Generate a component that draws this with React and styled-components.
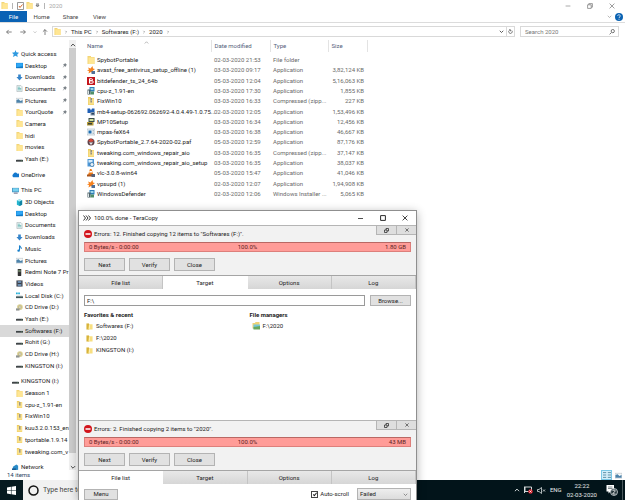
import React from "react";
import styled, { createGlobalStyle } from "styled-components";

const GlobalStyle = createGlobalStyle`
	*, *:before, *:after {
		box-sizing: border-box;
	}
	body {
		background-color: #fff;
		color: #1c1c1c;
		font: 6px/8px Roboto, "Open Sans", sans-serif;
		margin: 0;
		overflow: hidden;
	}
	button, input, select {
		color: inherit;
		font: inherit;
		margin: 0;
	}
	svg {
		display: block;
		flex: none;
	}
`;

// Explorer window
const Screen = styled.div`
	display: flex;
	flex-direction: column;
	height: 100vh;
	position: relative;
`;

const TitleBar = styled.header`
	align-items: center;
	color: #a9a9a9;
	display: flex;
	flex: none;
	gap: 2px;
	height: 11px;
	padding: 0 3px 0 1px;
`;

const Divider = styled.span`
	background-color: #b5b5b5;
	height: 6px;
	margin: 0 2px;
	width: 1px;
`;

const Spacer = styled.span`
	flex: 1;
`;

const PlainButton = styled.button`
	align-items: center;
	background: none;
	border: 0;
	display: flex;
	flex: none;
	justify-content: center;
	padding: 0;
	width: ${({ $width }) => $width || 8}px;
`;

const Ribbon = styled.nav`
	align-items: stretch;
	border-bottom: 1px solid #dcdcdc;
	display: flex;
	flex: none;
	height: 12px;
`;

const RibbonTab = styled.button`
	background-color: ${({ $active }) => ($active ? "#0a62b4" : "transparent")};
	border: 0;
	color: ${({ $active }) => ($active ? "#fff" : "#444")};
	padding: 0;
	width: ${({ $active }) => ($active ? 27 : 29)}px;
`;

const AddressBar = styled.div`
	align-items: center;
	display: flex;
	flex: none;
	height: 17px;
	padding: 0 6px 0 5px;
`;

const Arrows = styled.div`
	align-items: center;
	display: flex;
	flex: none;
	gap: 5px;
	width: 47px;
`;

const AddressBox = styled.div`
	align-items: center;
	border: 1px solid #d9d9d9;
	display: flex;
	flex: 1;
	gap: 3px;
	height: 11px;
	padding-left: 1px;
`;

const Crumb = styled.a`
	color: #1c1c1c;
	text-decoration: none;
`;

const RefreshButton = styled.button`
	align-items: center;
	align-self: stretch;
	background: none;
	border: 0;
	border-left: 1px solid #d9d9d9;
	display: flex;
	justify-content: center;
	padding: 0;
	width: 8px;
`;

const SearchBox = styled.label`
	align-items: center;
	border: 1px solid #d9d9d9;
	display: flex;
	height: 11px;
	margin-left: 5px;
	padding: 0 3px 0 4px;
	width: 99px;
	input {
		background: none;
		border: 0;
		flex: 1;
		height: 8px;
		min-width: 0;
		outline: none;
		padding: 0;
	}
	input::placeholder {
		color: #777;
	}
`;

const Main = styled.div`
	display: flex;
	flex: 1;
	min-height: 0;
`;

const Sidebar = styled.nav`
	flex: none;
	overflow: hidden;
	width: 69px;
`;

const Tree = styled.ul`
	display: flex;
	flex-direction: column;
	height: calc(100% + 3px);
	list-style: none;
	margin: 0;
	padding: 8px 0 0;
`;

const TreeItem = styled.li`
	align-items: center;
	background-color: ${({ $selected }) => ($selected ? "#d9d9d9" : "transparent")};
	display: flex;
	flex: 1 1 0;
	gap: 2px;
	margin-top: ${({ $spaced }) => ($spaced ? 4 : 0)}px;
	min-height: 0;
	padding-left: ${({ $top }) => ($top ? 12 : 16)}px;
	white-space: nowrap;
	a {
		color: inherit;
		flex: 1;
		text-decoration: none;
	}
`;

const PinSlot = styled.span`
	margin-right: 2px;
`;

const ScrollBar = styled.div`
	align-items: center;
	background-color: #f0f0f0;
	display: flex;
	flex: none;
	flex-direction: column;
	padding-top: 2px;
	width: 7px;
`;

const ScrollThumb = styled.div`
	background-color: #cdcdcd;
	flex: 1;
	margin-bottom: 11px;
	width: 100%;
`;

const Files = styled.div`
	flex: 1;
	padding: 0 0 0 8px;
`;

const FileTable = styled.table`
	border-collapse: collapse;
	height: 159px;
	table-layout: fixed;
	width: 283px;
	th {
		border-right: 1px solid #e3e3e3;
		color: #54617a;
		font-weight: 400;
		height: 12px;
		padding: 0 0 0 3px;
		position: relative;
		text-align: left;
	}
	td {
		color: #6a6a6a;
		padding: 0 0 0 3px;
		white-space: nowrap;
	}
	td:last-child {
		padding-right: 3px;
		text-align: right;
	}
	tbody:before {
		content: "";
		display: table-row;
		height: 3px;
	}
`;

const SortMark = styled.span`
	left: 60px;
	position: absolute;
	top: 0;
`;

const FileName = styled.span`
	align-items: center;
	color: #1c1c1c;
	display: flex;
	gap: 2px;
`;

const StatusBar = styled.footer`
	align-items: center;
	color: #2b3f5f;
	display: flex;
	flex: none;
	gap: 2px;
	height: 10px;
	padding: 0 2px 0 7px;
`;

const ViewButton = styled(PlainButton)`
	background-color: ${({ $on }) => ($on ? "#d3eef9" : "transparent")};
	border: 1px solid ${({ $on }) => ($on ? "#7cc8e6" : "transparent")};
	height: 10px;
`;

// Taskbar
const Taskbar = styled.footer`
	align-items: stretch;
	background-color: #02141a;
	color: #e6eaeb;
	display: flex;
	flex: none;
	height: 20px;
`;

const StartButton = styled(PlainButton)`
	background-color: #061a20;
`;

const TaskSearch = styled.label`
	align-items: center;
	background-color: #f1f1f1;
	display: flex;
	font-size: 7px;
	gap: 4px;
	padding-left: 5px;
	width: 140px;
	input {
		background: none;
		border: 0;
		flex: 1;
		min-width: 0;
		outline: none;
		padding: 0;
	}
	input::placeholder {
		color: #444;
	}
`;

const Tray = styled.div`
	align-items: center;
	display: flex;
	gap: 4px;
	padding-right: 2px;
`;

const Clock = styled.time`
	line-height: 9px;
	margin: 0 5px 0 1px;
	text-align: center;
`;

const DesktopEdge = styled.span`
	align-self: stretch;
	border-left: 1px solid #4a585c;
`;

// Copy window, floats over the explorer
const CopyWindow = styled.section`
	background-color: #fff;
	border: 1px solid #8f8f8f;
	border-bottom: 0;
	bottom: 0;
	box-shadow: 0 2px 9px rgba(0, 0, 0, .3);
	display: flex;
	flex-direction: column;
	left: 78px;
	overflow: hidden;
	position: absolute;
	top: 210px;
	width: 339px;
`;

const CopyTitle = styled.header`
	align-items: center;
	display: flex;
	flex: none;
	gap: 3px;
	height: 14px;
	padding: 0 2px 0 4px;
`;

const CopyPanel = styled.div`
	background-color: #f2f2f2;
	border-top: 1px solid #b5b5b5;
	display: flex;
	flex: none;
	flex-direction: column;
	padding: 0 5px 4px;
	position: relative;
`;

const PanelTools = styled.div`
	display: flex;
	position: absolute;
	right: 0;
	top: 0;
	button {
		background-color: #dedede;
		border: solid #b5b5b5;
		border-width: 0 0 1px 1px;
		height: 9px;
		width: 20px;
	}
`;

const Message = styled.div`
	align-items: center;
	display: flex;
	gap: 2px;
	height: 16px;
`;

const Progress = styled.div`
	align-items: center;
	background-color: #ff9c98;
	border: 1px solid #dd7f7b;
	border-top-color: #b96864;
	color: #5a1f1f;
	display: grid;
	grid-template-columns: 1fr 1fr 1fr;
	height: 10px;
	padding: 0 4px;
	span:nth-child(2) {
		text-align: center;
	}
	span:nth-child(3) {
		text-align: right;
	}
`;

const ButtonRow = styled.div`
	display: flex;
	gap: 4px;
	padding-top: 6px;
`;

const Button = styled.button`
	background-color: #e1e1e1;
	border: 1px solid #b3b3b3;
	flex: none;
	height: ${({ $height }) => $height || 13}px;
	padding: 0;
	width: ${({ $width }) => $width || 41}px;
`;

const Tabs = styled.div`
	border-top: 1px solid #a5a5a5;
	display: grid;
	flex: none;
	grid-template-columns: repeat(4, 1fr);
	height: 14px;
`;

const Tab = styled.button`
	background: ${({ $active }) => ($active ? "#fff" : "linear-gradient(#e8e8e8, #d6d6d6)")};
	border: 0;
	border-right: 1px solid ${({ $active }) => ($active ? "#fff" : "#c4c4c4")};
	padding: 0;
`;

const TargetPage = styled.div`
	flex: 1;
	padding: 6px 5px;
`;

const PathRow = styled.div`
	display: flex;
	gap: 5px;
	input {
		background-color: #fff;
		border: 1px solid #9a9a9a;
		flex: 1;
		height: 11px;
		min-width: 0;
		outline: none;
		padding: 0 2px;
	}
`;

const Places = styled.div`
	column-gap: 4px;
	display: grid;
	grid-template-columns: 1fr 1fr;
	padding-top: 5px;
	h2 {
		font-size: 6px;
		font-weight: 700;
		line-height: 8px;
		margin: 0;
	}
	ul {
		list-style: none;
		margin: 0;
		padding: 1px 0 0 2px;
	}
	li {
		align-items: center;
		display: flex;
		gap: 3px;
		height: 12px;
	}
	a {
		color: inherit;
		text-decoration: none;
	}
`;

const ListFooter = styled.div`
	align-items: center;
	display: flex;
	flex: none;
	height: 16px;
	justify-content: flex-end;
	padding: 4px 5px 0;
`;

const CheckLabel = styled.label`
	align-items: center;
	display: flex;
	gap: 2px;
	margin: 0 8px 0 auto;
	input {
		appearance: none;
		background-color: #fff;
		border: 1px solid #444;
		display: grid;
		height: 7px;
		width: 7px;
	}
	input:checked:after {
		border: solid #222;
		border-width: 0 1px 1px 0;
		content: "";
		height: 4px;
		place-self: center;
		transform: rotate(40deg);
		width: 2px;
	}
`;

const SelectWrap = styled.span`
	align-items: center;
	background: linear-gradient(#eee, #dcdcdc);
	border: 1px solid #b3b3b3;
	display: flex;
	height: 12px;
	padding: 0 2px;
	width: 54px;
	select {
		appearance: none;
		background: none;
		border: 0;
		flex: 1;
		outline: none;
		padding: 0;
	}
`;

// Icons
const Line = ({ d, size = 6, color = "#555", width = 1.2 }) =>
	<svg width={size} height={size} viewBox="0 0 10 10" fill="none" stroke={color} strokeWidth={width}>
		<path d={d} />
	</svg>;

const DOWN = "M1.5 3.5 5 7l3.5-3.5";
const UP = "M1.5 7 5 3.5 8.5 7";
const RIGHT = "M3.5 2 6.5 5l-3 3";
const CROSS = "M1 1l8 8M9 1 1 9";

const drawings = {
	folder: <><path d="M1 0h7v2h7v14H1z" fill="#f3d577" /><path d="M3 3h12v13H3z" fill="#ffe694" /></>,
	zip: <><path d="M2 0h6v2h6v14H2z" fill="#eecb5e" /><path d="M3 3h11v12H3z" fill="#f9e08a" /><path d="M7 2h3v9H7z" fill="#77715a" /><path d="M7 4h3M7 7h3M7 10h3" stroke="#eee" /></>,
	star: <path d="M8 0l2 5 6 1-4 4 1 6-5-3-6 3 2-6-4-4 6-1z" fill="#2f9ae0" />,
	desktop: <><path d="M0 2h16v12H0z" fill="#1687d9" /><path d="M1 3h14v6L1 12z" fill="#31a8f5" /><path d="M1 13h14" stroke="#0b5c9b" /></>,
	downloads: <path d="M5 1h6v6h4l-7 8-7-8h4z" fill="#3584ca" />,
	documents: <><path d="M2 1h9l3 3v11H2z" fill="#edf4f4" stroke="#8a9b9e" /><path d="M4 5h5M4 8h8M4 11h8" stroke="#4dabaa" strokeWidth="1.5" /></>,
	pictures: <><path d="M0 3h16v11H0z" fill="#f5f8fa" stroke="#a0aab0" /><path d="M1 7l5-2 4 4 5-2v6H1z" fill="#4d83aa" /></>,
	drive: <><path d="M2 7h12l2 3H0z" fill="#d5d8da" /><path d="M0 9h16v4H0z" fill="#3f4446" /><path d="M12 11h2" stroke="#70e084" /></>,
	cloud: <path d="M3 14a4 4 0 010-7 5 5 0 019-1 4 4 0 013 8z" fill="#1479ce" />,
	pc: <><path d="M0 2h16v10H0z" fill="#4a98c4" /><path d="M2 3h13v7H2z" fill="#78d1ef" /><path d="M4 14h9" stroke="#557" strokeWidth="2" /></>,
	cube: <><path d="M2 3l6-2 6 2v10l-6 3-6-3z" fill="#24b4ce" /><path d="M2 3l6 3 6-3-6-2z" fill="#9fe9f3" /><path d="M8 6v10l6-3V3z" fill="#1184a3" /></>,
	music: <><path d="M8 1v11M8 1c1 4 5 3 4 8" fill="none" stroke="#187fca" strokeWidth="2.4" /><ellipse cx="6" cy="13" rx="3" ry="2.5" fill="#187fca" /></>,
	phone: <><rect x="4" y="0" width="8" height="16" rx="1" fill="#333" /><path d="M5 2h6v5H5z" fill="#687b62" /></>,
	videos: <><path d="M1 1h14v14H1z" fill="#393d48" /><path d="M4 2h8v5H4zM4 9h8v5H4z" fill="#6a8cae" /><path d="M2.500 1v14M13.500 1v14" stroke="#ccc" strokeDasharray="1 2" /></>,
	localdisk: <><path d="M0 1h4v4H0zM5 1h4v4H5z" fill="#27b0d8" /><path d="M2 8h12l2 2H0z" fill="#ccd1d3" /><path d="M0 10h16v4H0z" fill="#3f5558" /></>,
	cd: <><circle cx="9" cy="7" r="6.500" fill="#d9cf94" /><circle cx="9" cy="7" r="2.500" fill="#fff" stroke="#837b55" /><path d="M0 10h8v5H0z" fill="#8f9390" /></>,
	network: <><path d="M2 6l8-5 4 3v9l-9 2-3-3z" fill="#2a8bc8" /><path d="M0 10h9v4H0z" fill="#175c93" /></>,
	avast: <><path d="M2 3l5 2 4-5 1 5 4 1-4 3 1 6-5-3-5 3 1-5-4-1 4-2z" fill="#f58220" /><path d="M9 10h7v6H9z" fill="#4f6f98" /></>,
	bitdefender: <><path d="M0 0h16v16H0z" fill="#c4151c" /><path d="M5 3.500h4a2 2 0 010 4H5h5a2 2 0 010 5H5z" fill="none" stroke="#fff" strokeWidth="2" /></>,
	installer: <><path d="M5 0h10v9H5z" fill="#2f7fb8" /><path d="M7 2h6v4H7z" fill="#9cd5e9" /><path d="M1 5h6v10H1z" fill="#4d6067" /><path d="M7 9h7v6H7z" fill="#4f8e67" /><path d="M3 7v7" stroke="#dde5e6" strokeWidth="2" /></>,
	malware: <><path d="M1 1h5l2 4 2-4h5v9H1z" fill="#1f5fb5" /><path d="M7 8h9v7H7z" fill="#8b9cb0" /><path d="M9 10h5v3H9z" fill="#28415f" /></>,
	mp10: <><path d="M3 0h12v8H3z" fill="#3b4c4b" /><path d="M5 2h8v4H5z" fill="#cfe0a0" /><path d="M0 8h13v7H0z" fill="#b49b38" /><path d="M2 10h8v3H2z" fill="#3c4137" /></>,
	app: <><path d="M0 2h16v12H0z" fill="#eef3f6" stroke="#92a5b1" /><path d="M3 5h6v6H3z" fill="#1f6eb0" /><path d="M11 5h3M11 8h3M11 11h3" stroke="#789" /></>,
	spybot: <><circle cx="8" cy="8" r="7" fill="#5c4249" /><path d="M2 6l6-5 6 5-6 2z" fill="#d6483a" /><path d="M4 9h8l-4 5z" fill="#e5e7ea" /></>,
	setup: <><path d="M1 0h13v15H1z" fill="#4d97d6" /><path d="M3 2h8v5H3z" fill="#d8ecfa" /><circle cx="10" cy="11" r="4" fill="#e7f2f8" stroke="#3471a7" strokeWidth="1.500" /></>,
	vlc: <><path d="M6 0h3l4 12H2z" fill="#ef7a16" /><path d="M5 4h5l1 3H4z" fill="#fff" /><path d="M0 11h15v4H0z" fill="#a8551c" /><path d="M9 10h7v6H9z" fill="#55617a" /></>,
	shared: <><path d="M1 2h5l1-2h8v13H1z" fill="#f0d375" /><path d="M3 5h13v9H3z" fill="#75c8dc" /><path d="M3 10l13-2v7H3z" fill="#6aa85c" /></>,
	error: <><circle cx="8" cy="8" r="8" fill="#d2141c" /><path d="M3 6.500h10v3H3z" fill="#fff" /></>,
	goldfolder: <><path d="M1 1h6v14H1z" fill="#d8b43c" /><path d="M7 3h8v12H5z" fill="#f8df80" /><path d="M8 5v8" stroke="#fff4b8" strokeWidth="2" /></>
};

const Icon = ({ name, size = 7 }) =>
	<svg width={size} height={size} viewBox="0 0 16 16" aria-hidden="true">{drawings[name]}</svg>;

const Pin = () =>
	<svg width="5" height="5" viewBox="0 0 10 10" aria-hidden="true">
		<path d="M6 0l4 4-2 1-1 3-2-2-4 4 3-5-2-2 3-1z" fill="#7b8288" />
	</svg>;

// Data
const tree = [
	{ label: "Quick access", icon: "star", top: true },
	{ label: "Desktop", icon: "desktop", pin: true },
	{ label: "Downloads", icon: "downloads", pin: true },
	{ label: "Documents", icon: "documents", pin: true },
	{ label: "Pictures", icon: "pictures", pin: true },
	{ label: "YourQuote", icon: "folder", pin: true },
	{ label: "Camera", icon: "folder" },
	{ label: "hidi", icon: "folder" },
	{ label: "movies", icon: "folder" },
	{ label: "Yash (E:)", icon: "drive" },
	{ label: "OneDrive", icon: "cloud", top: true, spaced: true },
	{ label: "This PC", icon: "pc", top: true, spaced: true },
	{ label: "3D Objects", icon: "cube" },
	{ label: "Desktop", icon: "desktop" },
	{ label: "Documents", icon: "documents" },
	{ label: "Downloads", icon: "downloads" },
	{ label: "Music", icon: "music" },
	{ label: "Pictures", icon: "pictures" },
	{ label: "Redmi Note 7 Pr", icon: "phone" },
	{ label: "Videos", icon: "videos" },
	{ label: "Local Disk (C:)", icon: "localdisk" },
	{ label: "CD Drive (D:)", icon: "cd" },
	{ label: "Yash (E:)", icon: "drive" },
	{ label: "Softwares (F:)", icon: "drive", selected: true },
	{ label: "Rohit (G:)", icon: "drive" },
	{ label: "CD Drive (H:)", icon: "cd" },
	{ label: "KINGSTON (I:)", icon: "drive" },
	{ label: "KINGSTON (I:)", icon: "drive", top: true, spaced: true },
	{ label: "Season 1", icon: "folder" },
	{ label: "cpu-z_1.91-en", icon: "zip" },
	{ label: "FixWin10", icon: "zip" },
	{ label: "kuu3.2.0.153_en", icon: "zip" },
	{ label: "tportable.1.9.14", icon: "zip" },
	{ label: "tweaking.com_v", icon: "zip" },
	{ label: "Network", icon: "network", top: true, spaced: true }
];

const files = [
	["folder", "SpybotPortable", "02-03-2020 21:53", "File folder", ""],
	["avast", "avast_free_antivirus_setup_offline (1)", "03-03-2020 09:17", "Application", "3,82,124 KB"],
	["bitdefender", "bitdefender_ts_24_64b", "05-03-2020 12:04", "Application", "5,16,063 KB"],
	["installer", "cpu-z_1.91-en", "03-03-2020 17:30", "Application", "1,855 KB"],
	["zip", "FixWin10", "03-03-2020 16:33", "Compressed (zipp...", "227 KB"],
	["malware", "mb4-setup-062692.062692-4.0.4.49-1.0.75...", "02-03-2020 12:05", "Application", "1,53,496 KB"],
	["mp10", "MP10Setup", "03-03-2020 16:34", "Application", "12,456 KB"],
	["app", "mpas-feX64", "03-03-2020 16:38", "Application", "46,667 KB"],
	["spybot", "SpybotPortable_2.7.64-2020-02.paf", "05-03-2020 12:59", "Application", "87,176 KB"],
	["zip", "tweaking.com_windows_repair_aio", "03-03-2020 16:35", "Compressed (zipp...", "37,147 KB"],
	["setup", "tweaking.com_windows_repair_aio_setup", "03-03-2020 16:35", "Application", "38,037 KB"],
	["vlc", "vlc-3.0.8-win64", "05-03-2020 15:47", "Application", "41,046 KB"],
	["avast", "vpsupd (1)", "02-03-2020 12:07", "Application", "1,94,908 KB"],
	["installer", "WindowsDefender", "02-03-2020 12:06", "Windows Installer ...", "5,065 KB"]
];

const CopyJob = ({ message, size, active }) =>
	<>
		<CopyPanel>
			<PanelTools>
				<PlainButton aria-label="Detach"><Line d="M1 4h5v5H1zM4 4V1h5v5H6" size={5} color="#333" width={1.600} /></PlainButton>
				<PlainButton aria-label="Remove"><Line d={CROSS} size={4} color="#333" width={1.600} /></PlainButton>
			</PanelTools>
			<Message><Icon name="error" size={8} />{message}</Message>
			<Progress><span>0 Bytes/s - 0:00:00</span><span>100.0%</span><span>{size}</span></Progress>
			<ButtonRow>
				<Button>Next</Button>
				<Button>Verify</Button>
				<Button>Close</Button>
			</ButtonRow>
		</CopyPanel>
		<Tabs role="tablist">
			{["File list", "Target", "Options", "Log"].map(name =>
				<Tab key={name} role="tab" aria-selected={name === active} $active={name === active}>{name}</Tab>
			)}
		</Tabs>
	</>;

const Copier = () =>
	<CopyWindow>
		<CopyTitle>
			<svg width="8" height="6" viewBox="0 0 16 12" fill="none" stroke="#222" strokeWidth="1.8">
				<path d="M1 1l4 5-4 5M6 1l4 5-4 5M11 1l4 5-4 5" />
			</svg>
			100.0% done - TeraCopy
			<Spacer />
			<PlainButton $width={20} aria-label="Minimize"><Line d="M0 5h10" size={5} color="#222" width={1.600} /></PlainButton>
			<PlainButton $width={20} aria-label="Maximize"><Line d="M1 1h8v8H1z" color="#222" width={1.600} /></PlainButton>
			<PlainButton $width={18} aria-label="Close window"><Line d={CROSS} color="#222" width={1.400} /></PlainButton>
		</CopyTitle>
		<CopyJob message={"Errors: 12. Finished copying 12 items to \"Softwares (F:)\"."} size="1.80 GB" active="Target" />
		<TargetPage>
			<PathRow>
				<input aria-label="Target folder" defaultValue="F:\" />
				<Button $height={11}>Browse...</Button>
			</PathRow>
			<Places>
				<div>
					<h2>Favorites &amp; recent</h2>
					<ul>
						<li><Icon name="goldfolder" /><a href="#softwares">Softwares (F:)</a></li>
						<li><Icon name="goldfolder" /><a href="#f2020">F:\2020</a></li>
						<li><Icon name="goldfolder" /><a href="#kingston">KINGSTON (I:)</a></li>
					</ul>
				</div>
				<div>
					<h2>File managers</h2>
					<ul>
						<li><Icon name="shared" size={8} /><a href="#manager">F:\2020</a></li>
					</ul>
				</div>
			</Places>
		</TargetPage>
		<CopyJob message={"Errors: 2. Finished copying 2 items to \"2020\"."} size="43 MB" active="File list" />
		<ListFooter>
			<Button $width={34} $height={11}>Menu</Button>
			<CheckLabel><input type="checkbox" defaultChecked />Auto-scroll</CheckLabel>
			<SelectWrap>
				<select aria-label="Filter" defaultValue="Failed"><option>Failed</option><option>All</option></select>
				<Line d={DOWN} size={5} />
			</SelectWrap>
		</ListFooter>
	</CopyWindow>;

const App = () =>
	<Screen>
		<GlobalStyle />
		<TitleBar>
			<Icon name="folder" />
			<Divider />
			<svg width="7" height="8" viewBox="0 0 14 16"><path d="M1 1h12v14H1z" fill="#fff" stroke="#777" strokeWidth="1.500" /><path d="M4 8l2 3 5-6" fill="none" stroke="#d6682d" strokeWidth="2" /></svg>
			<Icon name="folder" />
			<Line d="M2 2h6M2 4.500h6L5 8z" size={5} color="#333" />
			<Divider />
			2020
			<Spacer />
			<PlainButton $width={20} aria-label="Minimize"><Line d="M1 5h8" color="#888" /></PlainButton>
			<PlainButton $width={20} aria-label="Restore"><Line d="M1 3h6v6H1zM3 3V1h6v6H7" color="#777" /></PlainButton>
			<PlainButton $width={20} aria-label="Close"><Line d={CROSS} color="#777" /></PlainButton>
		</TitleBar>
		<Ribbon>
			<RibbonTab $active>File</RibbonTab>
			<RibbonTab>Home</RibbonTab>
			<RibbonTab>Share</RibbonTab>
			<RibbonTab>View</RibbonTab>
			<Spacer />
			<PlainButton aria-label="Expand ribbon"><Line d={DOWN} size={5} color="#888" /></PlainButton>
			<PlainButton $width={12} aria-label="Help">
				<svg width="8" height="8" viewBox="0 0 16 16"><circle cx="8" cy="8" r="8" fill="#0b63b3" /><path d="M5.500 6c0-4 5-3 5 0 0 2-2.500 2-2.500 4M8 11.500v2" fill="none" stroke="#fff" strokeWidth="1.500" /></svg>
			</PlainButton>
		</Ribbon>
		<AddressBar>
			<Arrows>
				<PlainButton aria-label="Back"><Line d="M9.500 5H1M4.500 1.500 1 5l3.500 3.500" /></PlainButton>
				<PlainButton $width={10} aria-label="Forward"><Line d="M.5 5H9M5.500 1.500 9 5 5.500 8.500" /></PlainButton>
				<PlainButton $width={4} aria-label="Recent"><Line d={DOWN} size={4} color="#888" /></PlainButton>
				<PlainButton $width={6} aria-label="Up"><Line d="M5 10V1M1.500 4.500 5 1l3.500 3.500" /></PlainButton>
			</Arrows>
			<AddressBox>
				<Icon name="folder" />
				<Line d={RIGHT} size={4} />
				<Crumb href="#pc">This PC</Crumb>
				<Line d={RIGHT} size={4} />
				<Crumb href="#f">Softwares (F:)</Crumb>
				<Line d={RIGHT} size={4} />
				<Crumb href="#2020">2020</Crumb>
				<Line d={RIGHT} size={4} />
				<Spacer />
				<PlainButton $width={4} aria-label="History"><Line d={DOWN} size={5} color="#333" width={1.600} /></PlainButton>
				<RefreshButton aria-label="Refresh"><Line d="M3 2.500a3.500 3.500 0 104.500.500M2 1.500h3v3" size={5} color="#333" /></RefreshButton>
			</AddressBox>
			<SearchBox>
				<input aria-label="Search" placeholder="Search 2020" />
				<Line d="M4 6 1 9M9 3.500a2.700 2.700 0 11-5.400 0 2.700 2.700 0 015.400 0z" color="#444" />
			</SearchBox>
		</AddressBar>
		<Main>
			<Sidebar>
				<Tree>
					{tree.map((item, i) =>
						<TreeItem key={i} $top={item.top} $spaced={item.spaced} $selected={item.selected}>
							<Icon name={item.icon} />
							<a href="#folder">{item.label}</a>
							{item.pin && <PinSlot><Pin /></PinSlot>}
						</TreeItem>
					)}
				</Tree>
			</Sidebar>
			<ScrollBar>
				<Line d={UP} color="#444" width={1.600} />
				<ScrollThumb />
				<Line d={DOWN} color="#444" width={1.600} />
			</ScrollBar>
			<Files>
				<FileTable>
					<colgroup>
						<col style={{ width: "127px" }} />
						<col style={{ width: "59px" }} />
						<col style={{ width: "58px" }} />
						<col style={{ width: "39px" }} />
					</colgroup>
					<thead>
						<tr>
							<th>Name<SortMark><Line d={UP} size={5} color="#888" /></SortMark></th>
							<th>Date modified</th>
							<th>Type</th>
							<th>Size</th>
						</tr>
					</thead>
					<tbody>
						{files.map(([icon, name, date, type, size]) =>
							<tr key={name}>
								<td><FileName><Icon name={icon} size={8} />{name}</FileName></td>
								<td>{date}</td>
								<td>{type}</td>
								<td>{size}</td>
							</tr>
						)}
					</tbody>
				</FileTable>
			</Files>
		</Main>
		<StatusBar>
			14 items
			<Spacer />
			<ViewButton $width={11} $on aria-label="Details view"><Line d="M0 2h4M6 2h4M0 5h4M6 5h4M0 8h4M6 8h4" size={8} color="#5d8fa6" /></ViewButton>
			<ViewButton $width={9} aria-label="Thumbnail view"><Icon name="pictures" /></ViewButton>
		</StatusBar>
		<Taskbar>
			<StartButton $width={23} aria-label="Start">
				<svg width="9" height="9" viewBox="0 0 16 16"><path d="M0 2.500 7 1.500v6H0zM8 1.300 16 0v7.500H8zM0 8.500h7v6l-7-1zM8 8.500h8V16l-8-1.300z" fill="#fff" /></svg>
			</StartButton>
			<TaskSearch>
				<svg width="11" height="11" viewBox="0 0 11 11"><circle cx="5.500" cy="5.500" r="4.500" fill="none" stroke="#111" strokeWidth="1.500" /></svg>
				<input aria-label="Taskbar search" placeholder="Type here to search" />
			</TaskSearch>
			<Spacer />
			<Tray>
				<Line d={UP} color="#e6eaeb" width={1.500} />
				<svg width="9" height="8" viewBox="0 0 18 16"><path d="M2 2h13v9H2zM1 1v13" fill="none" stroke="#e6eaeb" strokeWidth="1.800" /><circle cx="13" cy="11" r="4.500" fill="#d8232f" /><path d="M11 9l4 4M15 9l-4 4" stroke="#fff" strokeWidth="1.500" /></svg>
				<svg width="9" height="7" viewBox="0 0 18 14"><path d="M1 5h3l5-4v12L4 9H1zM12 5l4 4M16 5l-4 4" fill="none" stroke="#e6eaeb" strokeWidth="1.500" /></svg>
				<span>ENG</span>
				<Clock>22:22<br />02-03-2020</Clock>
				<svg width="12" height="12" viewBox="0 0 24 24"><path d="M1 2h15v13H9l-4 4v-4H1z" fill="#fff" /><path d="M4 6h9M4 9h9" stroke="#02141a" /><circle cx="16" cy="16" r="7" fill="#26363b" stroke="#dfe4e5" strokeWidth="1.500" /><path d="M13.500 14c0-3 5-3 5 0 0 2-5 3-5 6h5.500" fill="none" stroke="#fff" strokeWidth="1.600" /></svg>
				<DesktopEdge />
			</Tray>
		</Taskbar>
		<Copier />
	</Screen>;

export default App;
